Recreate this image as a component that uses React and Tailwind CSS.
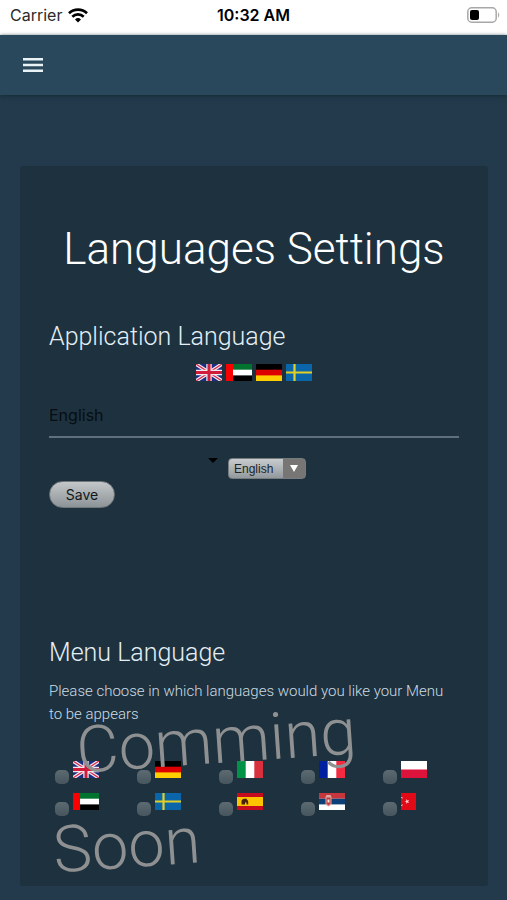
import React from "react";

function Flag({ code, label }) {
  const common = { viewBox: "0 0 26 17", preserveAspectRatio: "none", role: "img", "aria-label": label };
  if (code === "tr") {
    return (
      <svg {...common} viewBox="0 0 15 17" className="h-[17px] w-[15px] shrink-0">
        <rect width="15" height="17" fill="#e30a17" />
        <path d="M0 4.500a4.300 4.300 0 0 1 2 .7M0 12.500a4.300 4.300 0 0 0 2-.7" stroke="#f6a6a8" strokeWidth="1" fill="none" />
        <path d="M3.500 8.500l1.800-.6V6l1.100 1.500 1.700-.5-1 1.500 1 1.500-1.700-.5-1.100 1.500V9.100z" fill="#fbd0d0" />
      </svg>
    );
  }
  return (
    <svg {...common} className="h-[17px] w-[26px] shrink-0">
      {code === "gb" && (
        <>
          <rect width="26" height="17" fill="#1b2f80" />
          <path d="M0 0L26 17M26 0L0 17" stroke="#f3e6ee" strokeWidth="3.600" />
          <path d="M0 0L26 17M26 0L0 17" stroke="#d8284a" strokeWidth="1.200" />
          <path d="M13 0V17M0 8.500H26" stroke="#f3e6ee" strokeWidth="5.400" />
          <path d="M13 0V17M0 8.500H26" stroke="#d01c3a" strokeWidth="3" />
        </>
      )}
      {code === "ae" && (
        <>
          <rect width="26" height="17" fill="#fff" />
          <rect width="26" height="5.700" fill="#00732f" />
          <rect y="11.400" width="26" height="5.600" fill="#000" />
          <rect width="7" height="17" fill="#fb0000" />
        </>
      )}
      {code === "de" && (
        <>
          <rect width="26" height="17" fill="#dd0000" />
          <rect width="26" height="5.700" fill="#000" />
          <rect y="11.400" width="26" height="5.600" fill="#ffce00" />
        </>
      )}
      {code === "se" && (
        <>
          <rect width="26" height="17" fill="#0a66a8" />
          <path d="M8.500 0V17M0 8.500H26" stroke="#e3cf24" strokeWidth="2.200" />
        </>
      )}
      {code === "it" && (
        <>
          <rect width="26" height="17" fill="#fff" />
          <rect width="8.700" height="17" fill="#009246" />
          <rect x="17.300" width="8.700" height="17" fill="#d9303e" />
        </>
      )}
      {code === "fr" && (
        <>
          <rect width="26" height="17" fill="#fff" />
          <rect width="8.700" height="17" fill="#00209f" />
          <rect x="17.300" width="8.700" height="17" fill="#f42a41" />
        </>
      )}
      {code === "pl" && (
        <>
          <rect width="26" height="17" fill="#fff" />
          <rect y="8.500" width="26" height="8.500" fill="#dc143c" />
        </>
      )}
      {code === "es" && (
        <>
          <rect width="26" height="17" fill="#c60b1e" />
          <rect y="4" width="26" height="9" fill="#ffc400" />
          <path d="M4.500 11.500V7.500L6 6l3-.5L10.500 7l.7 1.500v3H9.500V9.500H8v2z" fill="#4a2208" />
        </>
      )}
      {code === "rs" && (
        <>
          <rect width="26" height="17" fill="#fff" />
          <rect width="26" height="5.700" fill="#c6363c" />
          <rect y="5.700" width="26" height="5.700" fill="#0c4076" />
          <path d="M6.500 4l1-2h4l1 2v6.500c0 2-3 3-3 3s-3-1-3-3z" fill="#d9aaa0" />
          <path d="M7.500 4.500h4v6l-2 2-2-2z" fill="#c6363c" />
          <path d="M8.500 6.500h2v3h-2z" fill="#f0e6e0" />
        </>
      )}
    </svg>
  );
}

const appFlags = [
  ["gb", "English"],
  ["ae", "Arabic"],
  ["de", "German"],
  ["se", "Swedish"],
];

const menuFlags = [
  ["gb", "English"],
  ["de", "German"],
  ["it", "Italian"],
  ["fr", "French"],
  ["pl", "Polish"],
  ["ae", "Arabic"],
  ["se", "Swedish"],
  ["es", "Spanish"],
  ["rs", "Serbian"],
  ["tr", "Turkish"],
];

function StatusBar() {
  return (
    <div className="grid h-[35px] grid-cols-3 items-center bg-white px-[10px] pb-[5px] font-['Inter',sans-serif] text-[16px] leading-5 font-normal text-[#2b2b2b]">
      <div className="flex items-center gap-[6px]">
        <span>Carrier</span>
        <svg viewBox="0 0 20 15" className="h-[15px] w-5" fill="none" stroke="#000" strokeWidth="2.700">
          <path d="M1 5.200a13 13 0 0 1 18 0" />
          <path d="M4.300 8.700a8.200 8.200 0 0 1 11.400 0" />
          <path d="M7 11.400a4.300 4.300 0 0 1 6 0L10 14.600z" fill="#000" stroke="none" />
        </svg>
      </div>
      <span className="text-center font-semibold whitespace-nowrap text-black">10:32 AM</span>
      <svg viewBox="0 0 33 16" className="-mr-[3px] h-4 w-[33px] justify-self-end">
        <rect x="0.800" y="0.800" width="28.400" height="14.400" rx="4" fill="none" stroke="#a8a8a8" strokeWidth="1.500" />
        <rect x="3" y="3" width="9" height="10" rx="2" fill="#000" />
        <path d="M31 5.500c1.600.6 1.600 4.400 0 5z" fill="#a8a8a8" />
      </svg>
    </div>
  );
}

export default function App() {
  return (
    <div className="min-h-screen bg-[#233a4c] pb-[14px] font-['Roboto',sans-serif] font-light text-[#e4eef5]">
      <StatusBar />
      <header className="flex h-[60px] items-center bg-[#29485c] px-[21px] shadow-[0_1px_4px_#142a35]">
        <button type="button" aria-label="Open menu" className="flex h-6 w-6 items-center justify-center">
          <svg viewBox="0 0 24 24" className="h-6 w-6" fill="#e9f3f6">
            <path d="M2 5h20v2.600H2zM2 10.700h20v2.600H2zM2 16.400h20V19H2z" />
          </svg>
        </button>
      </header>
      <main className="mr-[19px] ml-5 mt-[71px] min-h-[720px] rounded-[3px] bg-[#1d323e] px-[29px] pt-[53px]">
        <h1 className="text-center text-[44px] leading-[60px] whitespace-nowrap text-white">Languages Settings</h1>

        <section className="mt-[42px]">
          <h2 className="text-[25px] leading-8">Application Language</h2>
          <div className="mt-[11px] flex justify-center gap-[4px]">
            {appFlags.map(([code, label]) => (
              <Flag key={code} code={code} label={label} />
            ))}
          </div>
          <input
            aria-label="Selected language"
            readOnly
            value="English"
            className="mt-[11px] block h-[46px] w-full border-b-2 border-[#5f6f7c] bg-transparent pt-[2px] font-['Inter',sans-serif] text-[16px] font-normal text-[#070d12] outline-none"
          />
          <div className="mt-[20px] flex justify-center gap-[10px] pl-[6px]">
            <svg viewBox="0 0 10 5" className="h-[5px] w-[10px]">
              <path d="M0 0h10L5 5z" fill="#000" />
            </svg>
            <div className="relative flex">
              <select
                aria-label="Application language"
                className="h-[21px] w-[78px] appearance-none rounded-[4px] border border-[#767b7e] bg-[linear-gradient(90deg,transparent_54px,#777674_54px),linear-gradient(#c9ccce,#92999d)] pl-[5px] font-['Liberation_Sans',Arial,sans-serif] text-[12px] leading-[18px] font-normal text-[#1b2429]"
              >
                <option>English</option>
                <option>Arabic</option>
                <option>German</option>
                <option>Swedish</option>
              </select>
              <svg viewBox="0 0 8 7" className="pointer-events-none absolute top-[7px] right-[8px] h-[7px] w-2">
                <path d="M0 0h8L4 7z" fill="#fff" />
              </svg>
            </div>
          </div>
          <button
            type="button"
            className="mt-[2px] block h-[27px] w-[66px] rounded-full border border-[#717679] bg-linear-to-b from-[#c4c7c9] to-[#8d9498] font-['Inter',sans-serif] text-[14px] leading-5 font-normal text-[#11181c]"
          >
            Save
          </button>
        </section>

        <section className="relative mt-[129px]">
          <h2 className="text-[25px] leading-8">Menu Language</h2>
          <p className="mt-[11px] text-[15px] leading-[23px] text-[#cddbe3]">
            Please choose in which languages would you like your Menu to be appears
          </p>
          <div className="mt-[35px] grid grid-cols-5 gap-y-[9px]">
            {menuFlags.map(([code, label]) => (
              <label key={code} className="flex h-[23px] items-start gap-[4px] pl-[6px]">
                <input
                  type="checkbox"
                  aria-label={label}
                  className="mt-[9px] h-[14px] w-[14px] appearance-none rounded-[5px] bg-linear-to-b from-[#5d6a72] to-[#46555e]"
                />
                <Flag code={code} label={label} />
              </label>
            ))}
          </div>
          <div className="pointer-events-none absolute top-[67px] -left-[6px] origin-top-left -rotate-4 text-[65px] leading-[98px] font-light whitespace-nowrap text-[#8f9092]">
            <div className="pl-[30px]">Comming</div>
            <div>Soon</div>
          </div>
        </section>
      </main>
    </div>
  );
}
